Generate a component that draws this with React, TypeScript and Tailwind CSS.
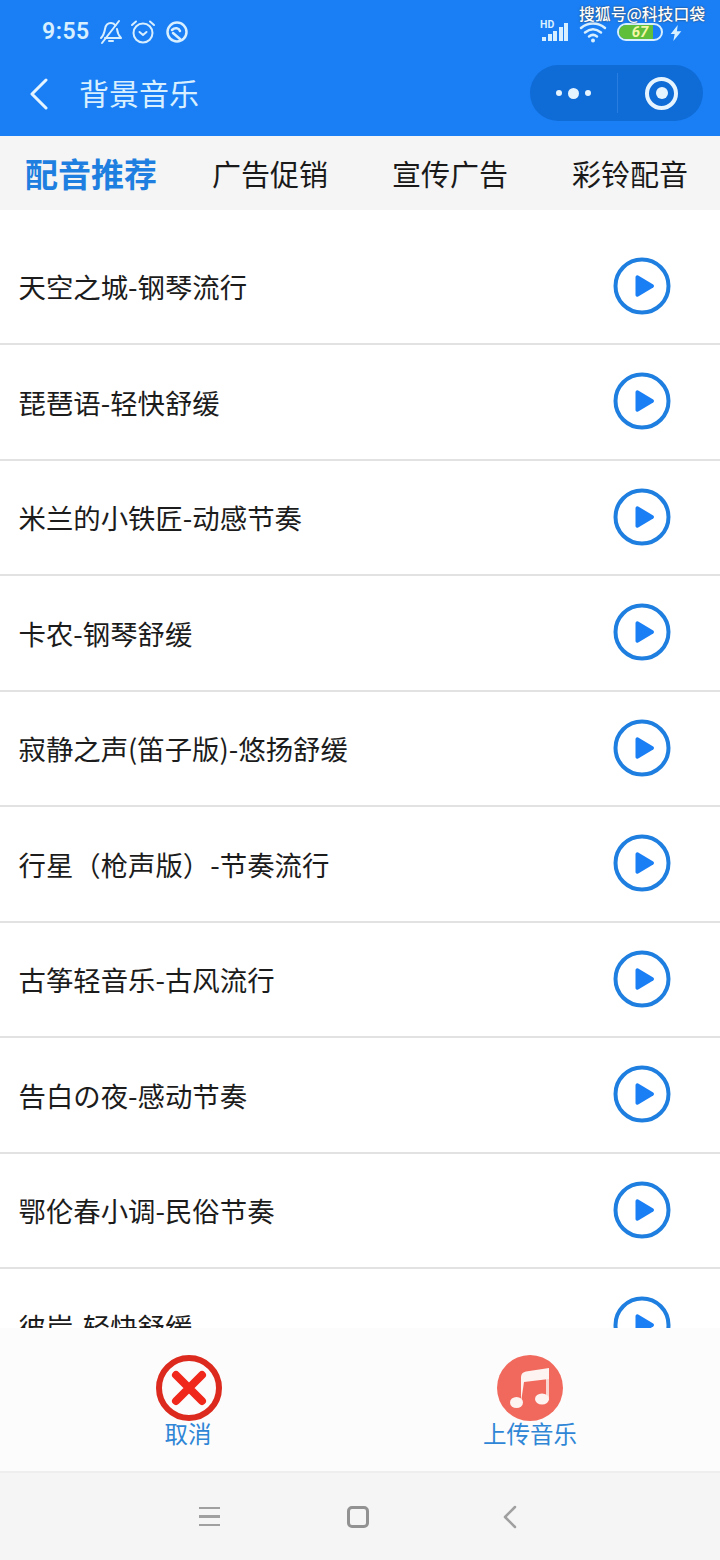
const cjk = "font-['Noto_Sans_CJK_SC','Noto_Sans',sans-serif]";

const tracks = [
  '天空之城-钢琴流行',
  '琵琶语-轻快舒缓',
  '米兰的小铁匠-动感节奏',
  '卡农-钢琴舒缓',
  '寂静之声(笛子版)-悠扬舒缓',
  '行星（枪声版）-节奏流行',
  '古筝轻音乐-古风流行',
  '告白の夜-感动节奏',
  '鄂伦春小调-民俗节奏',
  '彼岸-轻快舒缓',
];

function PlayIcon() {
  return (
    <svg width="58" height="58" viewBox="0 0 58 58" fill="none">
      <circle cx="29" cy="29" r="26.5" stroke="#1f7fe0" strokeWidth="4" />
      <path d="M22.500 20v18a1.800 1.800 0 0 0 2.700 1.500l15-9a1.800 1.800 0 0 0 0-3l-15-9a1.800 1.800 0 0 0-2.700 1.500z" fill="#1a7ff5" />
    </svg>
  );
}

function StatusBar() {
  return (
    <div className="flex h-[60px] items-end pl-[42px] pr-[38px] pb-[15px] text-[#d8efff]">
      <span className="w-[50px] text-[23px] leading-[26px] font-semibold font-['Roboto',sans-serif] tracking-[0.5px]">9:55</span>
      <svg className="ml-[7px]" width="24" height="26" viewBox="0 0 24 26" fill="none" stroke="currentColor" strokeWidth="2" strokeLinecap="round" strokeLinejoin="round">
        <path d="M2 19c2-2 3-3 4-9 .6-4 3-6 6-6 2 0 3.500 1 4.500 2.500M18 10c.6 5 2 7 4 9H6" />
        <path d="M10 22h4M3 24 20 2" />
      </svg>
      <svg className="ml-[7px]" width="26" height="26" viewBox="0 0 26 26" fill="none" stroke="currentColor" strokeWidth="2" strokeLinecap="round" strokeLinejoin="round">
        <circle cx="13" cy="14" r="9.500" />
        <path d="M9.500 13l3.500 3 3.500-3M2 6l4-3.500M24 6l-4-3.500" />
      </svg>
      <svg className="ml-[9px]" width="24" height="26" viewBox="0 0 24 26" fill="none" stroke="currentColor" strokeLinecap="round">
        <circle cx="12" cy="13" r="9.500" strokeWidth="2.500" />
        <path d="M7 11c3-3 7-2 8 1M8 14l7 6" strokeWidth="2.500" />
      </svg>
      <div className="ml-auto mb-[4px] flex items-end">
        <div className="relative h-[21px] w-[28px]">
          <span className="absolute left-0 top-0 text-[10.500px] leading-[9px] font-bold font-['Roboto',sans-serif]">HD</span>
          <div className="absolute bottom-0 right-0 flex items-end gap-[1.500px]">
            <i className="h-[4px] w-[4px] bg-current" />
            <i className="h-[7px] w-[4px] bg-current" />
            <i className="h-[10px] w-[4px] bg-current" />
            <i className="h-[14px] w-[4px] bg-current" />
            <i className="h-[18px] w-[4px] bg-current" />
          </div>
        </div>
        <svg className="ml-[11px] -mb-[2px]" width="28" height="22" viewBox="0 0 28 22" fill="none" stroke="currentColor" strokeWidth="2.500" strokeLinecap="round">
          <path d="M2 7c7-6 17-6 24 0M6 11.500c5-4 11-4 16 0M10 15.500c2.500-2 5.500-2 8 0" />
          <circle cx="14" cy="19.500" r="2" fill="currentColor" stroke="none" />
        </svg>
        <div className="relative ml-[10px] h-[18px] w-[46px] overflow-hidden rounded-full border-2 border-[#d8efff]">
          <div className="h-full w-[34px] bg-[#5fbf3a]" />
          <span className="absolute inset-0 flex items-center justify-center text-[15px] leading-none font-bold italic text-[#f4f7a8] font-['Roboto',sans-serif]">67</span>
        </div>
        <svg className="ml-[7px]" width="12" height="16" viewBox="0 0 12 18" fill="currentColor">
          <path d="M8 0 0 10h4.500L3 18l9-11H7z" />
        </svg>
      </div>
    </div>
  );
}

function NavBar() {
  return (
    <div className="flex h-[76px] items-start pl-[30px] pr-[17px]">
      <svg className="mt-[18px]" width="18" height="32" viewBox="0 0 18 32" fill="none" stroke="#e6f4ff" strokeWidth="3" strokeLinecap="round" strokeLinejoin="round">
        <path d="M16 2 2 16l14 14" />
      </svg>
      <span className={`ml-[31px] mt-[10px] text-[30px] leading-[44px] text-[#d8efff] ${cjk}`}>背景音乐</span>
      <div className="ml-auto mt-[5px] flex h-[56px] w-[173px] items-center rounded-full bg-[#0f6bd6]">
        <div className="flex w-[87px] items-center justify-center gap-[6px]">
          <i className="size-[6px] rounded-full bg-[#e6f4ff]" />
          <i className="size-[11px] rounded-full bg-[#e6f4ff]" />
          <i className="size-[6px] rounded-full bg-[#e6f4ff]" />
        </div>
        <div className="h-[40px] w-px bg-[#2a7de0]" />
        <div className="flex flex-1 items-center justify-center pl-[2px]">
          <div className="flex size-[33px] items-center justify-center rounded-full border-[4px] border-[#e6f4ff]">
            <i className="size-[12px] rounded-full bg-[#e6f4ff]" />
          </div>
        </div>
      </div>
    </div>
  );
}

function Tabs() {
  return (
    <div className={`flex h-[74px] items-center bg-[#f5f5f5] ${cjk}`}>
      <span className="ml-[25px] w-[187px] text-[33px] leading-[44px] font-bold text-[#1f7fe0]">配音推荐</span>
      <span className="w-[180px] text-[29px] leading-[44px] text-[#1a1a1a]">广告促销</span>
      <span className="w-[180px] text-[29px] leading-[44px] text-[#1a1a1a]">宣传广告</span>
      <span className="text-[29px] leading-[44px] text-[#1a1a1a]">彩铃配音</span>
    </div>
  );
}

function TrackRow({ name }: { name: string }) {
  return (
    <div className="flex h-[115.5px] shrink-0 items-center border-b-2 border-[#e2e2e2] pl-[18.500px] pr-[49px]">
      <span className={`text-[27.4px] leading-[40px] text-[#1c1c1c] ${cjk}`}>{name}</span>
      <div className="ml-auto -mt-[1px]">
        <PlayIcon />
      </div>
    </div>
  );
}

function BottomBar() {
  return (
    <div className={`flex h-[145px] shrink-0 border-b-2 border-[#eeeeee] bg-[#fcfcfc] ${cjk}`}>
      <div className="flex w-[376px] flex-col items-center pt-[27px]">
        <svg className="ml-[1px]" width="66" height="66" viewBox="0 0 66 66" fill="none">
          <circle cx="33" cy="33" r="30" stroke="#dc2b1e" strokeWidth="6" />
          <path d="M20 20l26 26M46 20 20 46" stroke="#f0281c" strokeWidth="8" strokeLinecap="round" />
        </svg>
        <span className="-mt-[3px] text-[23.500px] leading-[30px] text-[#2f86d6]">取消</span>
      </div>
      <div className="flex w-[308px] flex-col items-center pt-[27px]">
        <svg width="66" height="66" viewBox="0 0 66 66" fill="none">
          <circle cx="33" cy="33" r="33" fill="#f1695c" />
          <path d="M50.500 14v31" stroke="#f9d6d1" strokeWidth="3" />
          <path d="M24 47V22c0-3 2-5 5-5.500L52 13v11l-25 3z" fill="#fdf3f1" />
          <ellipse cx="19.500" cy="47.500" rx="6.500" ry="5.500" fill="#fdf3f1" />
          <ellipse cx="45" cy="44" rx="7" ry="5.500" fill="#fdf3f1" />
        </svg>
        <span className="-mt-[3px] text-[23.500px] leading-[30px] text-[#2f86d6]">上传音乐</span>
      </div>
    </div>
  );
}

function SystemNav() {
  return (
    <div className="flex h-[87px] shrink-0 items-center bg-[#f5f5f5] text-[#a0a0a0]">
      <div className="ml-[199px] flex w-[21px] flex-col gap-[6px]">
        <i className="h-[2.500px] bg-current" />
        <i className="h-[2.500px] bg-current" />
        <i className="h-[2.500px] bg-current" />
      </div>
      <div className="ml-[127px] size-[22px] rounded-[5px] border-[3px] border-[#929292]" />
      <svg className="ml-[132px]" width="18" height="24" viewBox="0 0 18 24" fill="none" stroke="currentColor" strokeWidth="2.500" strokeLinecap="round" strokeLinejoin="round">
        <path d="M14 2 4 12l10 10" />
      </svg>
    </div>
  );
}

export default function App() {
  return (
    <div className="relative flex h-[1560px] w-[720px] flex-col overflow-hidden bg-white">
      <div className="h-[136px] shrink-0 bg-[#1a7ff5]">
        <StatusBar />
        <NavBar />
      </div>
      <Tabs />
      <div className="flex h-[1118px] shrink-0 flex-col overflow-hidden pt-[19.500px]">
        {tracks.map(name => (
          <TrackRow key={name} name={name} />
        ))}
      </div>
      <BottomBar />
      <SystemNav />
      {/* watermark */}
      <span className={`absolute right-[15px] top-[3px] text-[15.800px] leading-[22px] font-medium text-white [text-shadow:0_0_2px_#333] ${cjk}`}>搜狐号@科技口袋</span>
    </div>
  );
}
